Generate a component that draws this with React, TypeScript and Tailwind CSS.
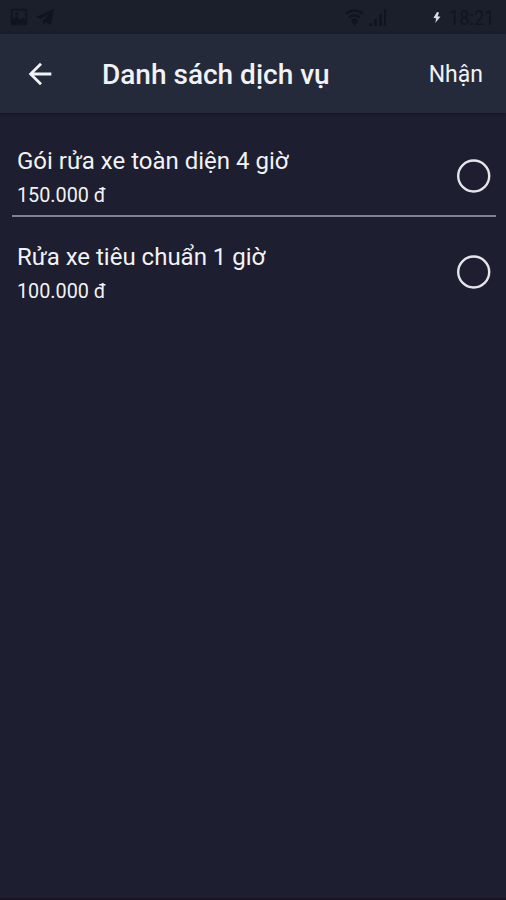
import React from 'react';

const services = [
  { name: 'Gói rửa xe toàn diện 4 giờ', price: '150.000 đ' },
  { name: 'Rửa xe tiêu chuẩn 1 giờ', price: '100.000 đ' }
];

const StatusBar: React.FC = () => (
  <div className="flex h-[34px] items-center bg-[#1b1f2c] pl-2 pr-[11px] text-[#11141f]">
    <svg className="size-[22px]" viewBox="0 0 24 24" fill="currentColor">
      <path fillRule="evenodd" d="M5 3h14a2 2 0 0 1 2 2v14a2 2 0 0 1-2 2H5a2 2 0 0 1-2-2V5a2 2 0 0 1 2-2zm0 2v10l4-4 4 4 3-2 3 2V5zm3 2h3v3H8z" />
    </svg>
    <svg className="ml-[5px] size-5" viewBox="0 0 24 24" fill="currentColor">
      <path d="M23 2 1 12l6 2.500L18 7l-8.500 9v6l3.500-4 6 4z" />
    </svg>
    <svg className="ml-auto size-[19px]" viewBox="0 0 24 24" fill="none" stroke="currentColor" strokeWidth="3">
      <path d="M1.500 7.500a15 15 0 0 1 21 0M5 12a10 10 0 0 1 14 0M8.500 16.200a5 5 0 0 1 7 0" />
      <path d="m12 23-4-6h8z" fill="currentColor" stroke="none" />
    </svg>
    <svg className="ml-[5px] size-[18px]" viewBox="0 0 18 18" fill="currentColor">
      <path d="M0 15h3v3H0zM5 11h3v7H5zM10 6h3v12h-3zM15 1h2v17h-2z" />
    </svg>
    <svg className="ml-[46px] h-[11px] w-2" viewBox="0 0 8 11" fill="#d9dbe1">
      <path d="M4 0 .5 5.800l2.700.6L2.200 11 7.500 4.800 4.700 4.300 6 .6z" />
    </svg>
    <span className="ml-2 mt-0.5 w-[46px] origin-left scale-x-[0.87] text-[21px] leading-none">18:21</span>
  </div>
);

const Header: React.FC = () => (
  <header className="flex h-[79px] items-center bg-[#242a3a] pl-[23px] pr-[23px] shadow-[0_1px_3px_rgba(0,0,0,0.35)]">
    <button type="button" aria-label="Quay lại">
      <svg className="size-[34px]" viewBox="0 0 24 24" fill="currentColor">
        <path d="M20 11H7.830l5.590-5.590L12 4l-8 8 8 8 1.410-1.410L7.830 13H20z" />
      </svg>
    </button>
    <h1 className="ml-[45px] mt-0.5 text-[28px] font-medium leading-8">Danh sách dịch vụ</h1>
    <button type="button" className="ml-auto mt-0.5 text-[23px] leading-8">Nhận</button>
  </header>
);

const App: React.FC = () => {
  return (
    <div className="flex h-[900px] w-[506px] flex-col overflow-hidden border-b-2 border-[#1f1024] bg-[#1d1e2f] font-[Roboto,sans-serif] text-[#f1f2f5]">
      <StatusBar />
      <Header />
      <ul className="flex flex-col pl-3 pr-2.5 pt-2">
        {services.map((service) => (
          <li
            key={service.name}
            className="flex h-24 items-end justify-between border-b-2 border-[#808191] pb-[7px] pl-[5px] pr-[5px] last:border-transparent"
          >
            <div>
              <p className="text-[24px] leading-8">{service.name}</p>
              <p className="mt-[7px] text-[19.8px] leading-6">{service.price}</p>
            </div>
            <svg className="mb-[15px] size-[34px]" viewBox="0 0 34 34" fill="none" stroke="#e4e5ea" strokeWidth="2.400">
              <circle cx="16.700" cy="17" r="15.500" />
            </svg>
          </li>
        ))}
      </ul>
    </div>
  );
};

export default App;
